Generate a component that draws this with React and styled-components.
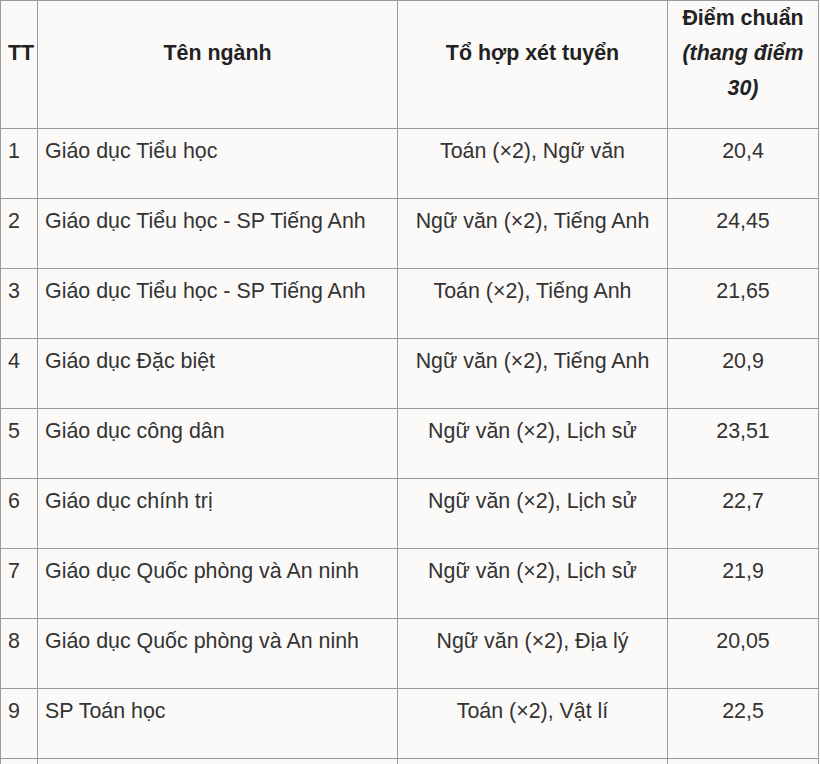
import styled, { createGlobalStyle } from "styled-components";

const GlobalStyle = createGlobalStyle`
  html, body {
    margin: 0;
    padding: 0;
    background: #fbfaf8;
  }
  body {
    font-family: "Liberation Sans", Arial, sans-serif;
  }
`;

const Page = styled.div`
  width: 820px;
  height: 764px;
  overflow: hidden;
  background: #fbfaf8;
`;

const Table = styled.table`
  width: 819px;
  border-collapse: collapse;
  table-layout: fixed;
  font-size: 21.4px;
  line-height: 35px;
  color: #333;
`;

const Head = styled.th`
  height: 105px;
  padding: 0 6px 22px;
  border: 1px solid #9a9a9a;
  vertical-align: middle;
  text-align: ${(p) => (p.$left ? "left" : "center")};
  font-weight: bold;
  color: #222;
  ${(p) => p.$left && "padding-left: 7px;"}
`;

const Cell = styled.td`
  height: 64px;
  padding: 5px 7px 0;
  border: 1px solid #9a9a9a;
  vertical-align: top;
  text-align: ${(p) => (p.$center ? "center" : "left")};
  white-space: nowrap;
`;

const Note = styled.em`
  font-style: italic;
`;

const rows = [
  ["1", "Giáo dục Tiểu học", "Toán (×2), Ngữ văn", "20,4"],
  ["2", "Giáo dục Tiểu học - SP Tiếng Anh", "Ngữ văn (×2), Tiếng Anh", "24,45"],
  ["3", "Giáo dục Tiểu học - SP Tiếng Anh", "Toán (×2), Tiếng Anh", "21,65"],
  ["4", "Giáo dục Đặc biệt", "Ngữ văn (×2), Tiếng Anh", "20,9"],
  ["5", "Giáo dục công dân", "Ngữ văn (×2), Lịch sử", "23,51"],
  ["6", "Giáo dục chính trị", "Ngữ văn (×2), Lịch sử", "22,7"],
  ["7", "Giáo dục Quốc phòng và An ninh", "Ngữ văn (×2), Lịch sử", "21,9"],
  ["8", "Giáo dục Quốc phòng và An ninh", "Ngữ văn (×2), Địa lý", "20,05"],
  ["9", "SP Toán học", "Toán (×2), Vật lí", "22,5"],
  ["", "", "", ""],
];

export default function App() {
  return (
    <Page>
      <GlobalStyle />
      <Table>
        <colgroup>
          <col style={{ width: 37 }} />
          <col style={{ width: 360 }} />
          <col style={{ width: 270 }} />
          <col style={{ width: 151 }} />
        </colgroup>
        <thead>
          <tr>
            <Head $left>TT</Head>
            <Head>Tên ngành</Head>
            <Head>Tổ hợp xét tuyển</Head>
            <Head>
              Điểm chuẩn
              <br />
              <Note>(thang điểm 30)</Note>
            </Head>
          </tr>
        </thead>
        <tbody>
          {rows.map((r, i) => (
            <tr key={i}>
              <Cell>{r[0]}</Cell>
              <Cell>{r[1]}</Cell>
              <Cell $center>{r[2]}</Cell>
              <Cell $center>{r[3]}</Cell>
            </tr>
          ))}
        </tbody>
      </Table>
    </Page>
  );
}
